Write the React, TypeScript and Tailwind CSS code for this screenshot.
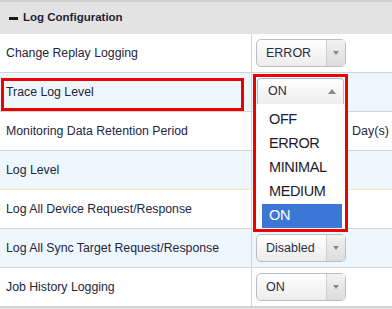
import React from "react";

const rows = [
  { label: "Change Replay Logging", value: "ERROR", alt: false },
  { label: "Trace Log Level", value: null, alt: true },
  { label: "Monitoring Data Retention Period", value: null, alt: false },
  { label: "Log Level", value: null, alt: true },
  { label: "Log All Device Request/Response", value: null, alt: false },
  { label: "Log All Sync Target Request/Response", value: "Disabled", alt: true },
  { label: "Job History Logging", value: "ON", alt: false },
];

function Select({ value }: { value: string }) {
  return (
    <div className="flex h-[28px] w-[90px] rounded-[5px] border border-[#bdbdbd] bg-gradient-to-b from-white to-[#ececec] text-[12.5px] text-[#2c2c44]">
      <div className="flex flex-1 items-center pl-[9px]">{value}</div>
      <div className="flex w-[19px] items-center justify-center border-l border-[#cfcfcf] bg-gradient-to-b from-[#f2f2f2] to-[#dcdcdc]">
        <div className="h-0 w-0 border-x-[3px] border-t-[4px] border-x-transparent border-t-[#888]" />
      </div>
    </div>
  );
}

export default function App() {
  const options = ["OFF", "ERROR", "MINIMAL", "MEDIUM", "ON"];
  return (
    <div
      className="relative h-[309px] w-[392px] overflow-hidden bg-white"
      style={{ fontFamily: "'Liberation Sans', Arial, sans-serif" }}
    >
      {/* Section header */}
      <div className="flex h-[34px] items-center border-t-2 border-[#cfcfcf] bg-[#e3e3e3] pl-[9px]">
        <div className="mr-[5px] h-[3px] w-[9px] bg-[#1a1a1a]" />
        <span className="text-[11.5px] font-bold text-[#1f1f33]">Log Configuration</span>
      </div>

      {rows.map((r, i) => (
        <div
          key={i}
          className={`flex h-[39px] border-b ${i === 3 ? "border-[#f1e6b8]" : "border-[#d4d4d4]"} ${
            r.alt ? "bg-[#eef6fe]" : "bg-white"
          }`}
        >
          <div className="flex w-[252px] items-center border-r border-[#d4d4d4] pl-[6px] text-[12.3px] text-[#252540]">
            {r.label}
          </div>
          <div className="flex flex-1 items-center pl-[4px]">
            {r.value && <Select value={r.value} />}
            {i === 2 && <span className="ml-[96px] text-[12.5px] text-[#252540]">Day(s)</span>}
          </div>
        </div>
      ))}
      <div className="h-[3px] border-t border-[#d4d4d4] bg-[#e3e3e3]" />

      {/* Highlight around the label */}
      <div className="absolute left-[1px] top-[78px] h-[33px] w-[243px] border-[3px] border-[#ee0000]" />

      {/* Open dropdown with highlight */}
      <div className="absolute left-[253px] top-[74px] flex h-[158px] w-[95px] flex-col border-[3px] border-[#ee0000] bg-white">
        <div className="mx-[1px] mt-[1px] flex h-[26px] items-center justify-between rounded-t-[4px] border border-b-0 border-[#9fbfe6] bg-gradient-to-b from-white to-[#ededed] pl-[10px] pr-[7px] text-[12.5px] text-[#2c2c44]">
          <span>ON</span>
          <div className="h-0 w-0 border-x-[4px] border-b-[5px] border-x-transparent border-b-[#888]" />
        </div>
        <div className="flex flex-1 flex-col pl-[6px] pr-[3px] pt-[4px]">
          {options.map((o) => (
            <div
              key={o}
              className={`flex h-[24px] items-center pl-[7px] text-[14.5px] tracking-[-0.4px] ${
                o === "ON" ? "bg-[#3b77d5] text-white" : "text-[#1a1a2e]"
              }`}
            >
              {o}
            </div>
          ))}
        </div>
      </div>
    </div>
  );
}
